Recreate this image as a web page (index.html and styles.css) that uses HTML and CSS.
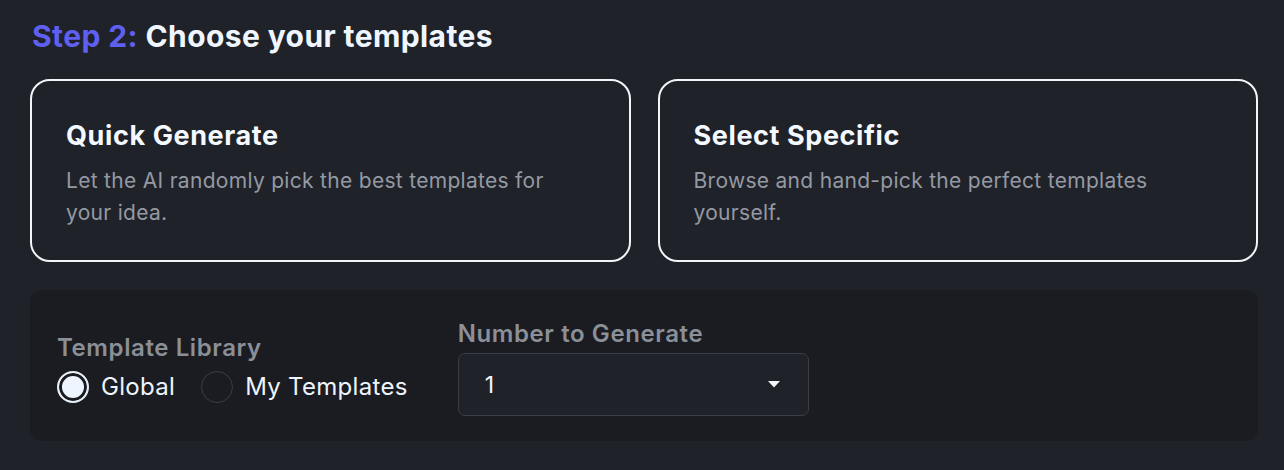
FILE: index.html
```html
<!DOCTYPE html>
<html lang="en">
<head>
<meta charset="utf-8">
<title>Choose your templates</title>
<link rel="stylesheet" href="styles.css">
</head>
<body>
<main class="step">
  <h2 class="step-title"><span class="step-num">Step 2:</span> Choose your templates</h2>
  <div class="modes">
    <button class="mode-card" type="button">
      <span class="mode-name">Quick Generate</span>
      <span class="mode-desc">Let the AI randomly pick the best templates for your idea.</span>
    </button>
    <button class="mode-card" type="button">
      <span class="mode-name">Select Specific</span>
      <span class="mode-desc">Browse and hand-pick the perfect templates yourself.</span>
    </button>
  </div>
  <section class="options">
    <div class="field">
      <div class="field-label">Template Library</div>
      <div class="radios">
        <label class="radio"><span class="dot checked"></span><span>Global</span></label>
        <label class="radio"><span class="dot"></span><span>My Templates</span></label>
      </div>
    </div>
    <div class="field">
      <div class="field-label">Number to Generate</div>
      <div class="select">
        <span>1</span>
        <svg class="caret" width="12" height="7" viewBox="0 0 12 7"><path d="M0 0h12L6 6.5z" fill="#f3f6fb"/></svg>
      </div>
    </div>
  </section>
</main>
</body>
</html>
```

FILE: styles.css
```css
* { box-sizing: border-box; }
html, body { margin: 0; padding: 0; }
body {
  background: #1f2229;
  font-family: Inter, "Noto Sans", "Liberation Sans", sans-serif;
  color: #f0f6ff;
  width: 1284px;
  height: 470px;
  overflow: hidden;
}
.step {
  padding: 16px 26px 0 30px;
}
.step-title {
  margin: 0 0 0 2px;
  font-size: 30px;
  line-height: 40px;
  font-weight: 700;
  color: #f0f6ff;
  letter-spacing: 0.4px;
}
.step-num { color: #5f5ff0; }
.modes {
  margin-top: 23px;
  display: grid;
  grid-template-columns: 1fr 1fr;
  gap: 27px;
}
.mode-card {
  display: flex;
  flex-direction: column;
  align-items: flex-start;
  text-align: left;
  height: 183px;
  padding: 38px 30px 0 34px;
  background: #1f2229;
  border: 2px solid #f2f6fb;
  border-radius: 20px;
  font-family: inherit;
  color: inherit;
  cursor: pointer;
}
.mode-name {
  font-size: 27px;
  line-height: 34px;
  font-weight: 700;
  color: #f4f8ff;
  letter-spacing: 0.6px;
}
.mode-desc {
  margin-top: 12px;
  font-size: 21px;
  line-height: 32px;
  color: #9599a3;
  letter-spacing: 0.3px;
  max-width: 500px;
}
.options {
  margin-top: 28px;
  background: #1a1c22;
  border-radius: 12px;
  padding: 29px 27px 25px 27px;
  display: flex;
  align-items: center;
  gap: 50px;
}
.field { display: flex; flex-direction: column; }
.field-label {
  font-size: 24px;
  line-height: 30px;
  font-weight: 600;
  color: #8b8f98;
  letter-spacing: 0.6px;
}
.radios {
  display: flex;
  align-items: center;
  gap: 26px;
  margin-top: 8px;
}
.radio {
  display: flex;
  align-items: center;
  gap: 12px;
  font-size: 24px;
  line-height: 32px;
  color: #eef4fc;
  letter-spacing: 0.3px;
}
.dot {
  width: 32px;
  height: 32px;
  border-radius: 50%;
  border: 1px solid #3a3d45;
  flex: none;
}
.dot.checked {
  border: 2px solid #e8eff8;
  background: #eef5ff;
  box-shadow: inset 0 0 0 3px #1a1c22;
}
.select {
  margin-top: 4px;
  width: 351px;
  height: 63px;
  border: 1px solid #3b3e46;
  border-radius: 7px;
  background: #1f2229;
  display: flex;
  align-items: center;
  justify-content: space-between;
  padding: 0 28px 0 26px;
  font-size: 23px;
  color: #f0f6ff;
}
.caret { display: block; }
```
